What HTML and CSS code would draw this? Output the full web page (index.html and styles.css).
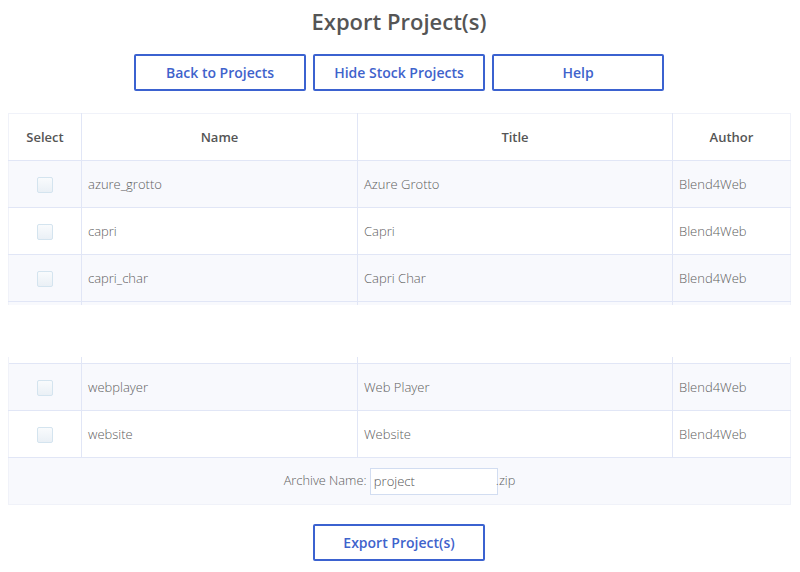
FILE: index.html
```html
<!DOCTYPE html>
<html lang="en">
<head>
    <meta charset="UTF-8">
    <title>Export Project(s)</title>
    <link rel="stylesheet" href="styles.css">
</head>
<body>
    <h1 class="page-title">Export Project(s)</h1>

    <div class="top-buttons">
        <button class="btn">Back to Projects</button>
        <button class="btn">Hide Stock Projects</button>
        <button class="btn">Help</button>
    </div>

    <table class="projects">
        <colgroup>
            <col class="col-select">
            <col class="col-name">
            <col class="col-title">
            <col class="col-author">
        </colgroup>
        <thead>
            <tr>
                <th>Select</th>
                <th>Name</th>
                <th>Title</th>
                <th>Author</th>
            </tr>
        </thead>
        <tbody>
            <tr class="odd">
                <td class="sel"><span class="check"></span></td>
                <td>azure_grotto</td>
                <td>Azure Grotto</td>
                <td>Blend4Web</td>
            </tr>
            <tr>
                <td class="sel"><span class="check"></span></td>
                <td>capri</td>
                <td>Capri</td>
                <td>Blend4Web</td>
            </tr>
            <tr class="odd">
                <td class="sel"><span class="check"></span></td>
                <td>capri_char</td>
                <td>Capri Char</td>
                <td>Blend4Web</td>
            </tr>
            <tr class="cut cut-top">
                <td></td><td></td><td></td><td></td>
            </tr>
            <tr class="gap">
                <td colspan="4"></td>
            </tr>
            <tr class="cut cut-bottom">
                <td></td><td></td><td></td><td></td>
            </tr>
            <tr class="odd">
                <td class="sel"><span class="check"></span></td>
                <td>webplayer</td>
                <td>Web Player</td>
                <td>Blend4Web</td>
            </tr>
            <tr>
                <td class="sel"><span class="check"></span></td>
                <td>website</td>
                <td>Website</td>
                <td>Blend4Web</td>
            </tr>
            <tr class="archive">
                <td colspan="4">
                    Archive Name: <input type="text" class="archive-input" value="project">.zip
                </td>
            </tr>
        </tbody>
    </table>

    <div class="bottom-buttons">
        <button class="btn">Export Project(s)</button>
    </div>
</body>
</html>
```

FILE: styles.css
```css
body {
    margin: 0;
    padding: 0 10px 0 8px;
    font-family: 'Open Sans', sans-serif;
    color: #666;
    background: white;
}
.page-title {
    margin: 0;
    padding-top: 6px;
    height: 49px;
    box-sizing: border-box;
    text-align: center;
    font-size: 22px;
    font-weight: 600;
    color: #555;
}
.top-buttons,
.bottom-buttons {
    display: flex;
    justify-content: center;
    gap: 7px;
}
.top-buttons {
    margin-top: 5px;
    margin-bottom: 22px;
}
.bottom-buttons {
    margin-top: 19px;
}
.btn {
    width: 172px;
    height: 37px;
    background: white;
    border: 2px solid #3b62d0;
    border-radius: 2px;
    color: #3f63cc;
    font-family: 'Open Sans', sans-serif;
    font-size: 14px;
    font-weight: 600;
    padding: 0;
}
.projects {
    width: 782px;
    table-layout: fixed;
    border-collapse: collapse;
    font-size: 13px;
    font-weight: 300;
}
.col-select { width: 73px; }
.col-name { width: 276px; }
.col-title { width: 315px; }
.col-author { width: 118px; }
.projects th,
.projects td {
    height: 46px;
    padding: 0 6px;
    border: 1px solid #e1e6f6;
    text-align: left;
    color: #606060;
}
.projects th {
    text-align: center;
    font-weight: 600;
    color: #555;
    border-top-color: #f0f2f9;
}
.projects th:first-child,
.projects td:first-child {
    border-left-color: #f0f2f9;
}
.projects th:last-child,
.projects td:last-child {
    border-right-color: #f0f2f9;
}
.projects tr.odd td {
    background: #f8f9fd;
}
.projects td.sel {
    text-align: center;
    padding: 0;
}
.check {
    display: inline-block;
    width: 14px;
    height: 14px;
    border: 1px solid #d4e4ef;
    border-radius: 2px;
    background: linear-gradient(#f9fbfd, #eaf0f6);
    vertical-align: middle;
}
.projects tr.cut td {
    background: white;
    border-top: none;
    border-bottom: none;
}
.projects tr.cut-top td {
    height: 3px;
    background: #f8f9fd;
    border-top: 1px solid #e1e6f6;
}
.projects tr.cut-bottom td {
    height: 6px;
}
.projects tr.gap td {
    height: 52px;
    border: none;
    background: white;
}
.projects tr.archive td {
    text-align: center;
    font-size: 12.8px;
    background: #f8f9fd;
    border-left-color: #f0f2f9;
    border-right-color: #f0f2f9;
    border-bottom-color: #f0f2f9;
}
.archive-input {
    width: 128px;
    height: 27px;
    box-sizing: border-box;
    border: 1px solid #d2ddf1;
    padding: 0 3px;
    font-family: 'Open Sans', sans-serif;
    font-size: 13px;
    font-weight: 300;
    color: #555;
    vertical-align: middle;
    margin-right: -2px;
}
```
